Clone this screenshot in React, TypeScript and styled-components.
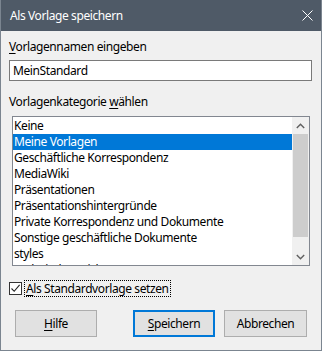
import * as React from "react";
import styled, { createGlobalStyle } from "styled-components";

const GlobalStyle = createGlobalStyle`
  html, body {
    margin: 0;
    padding: 0;
    background: #f0f0f0;
  }
  * {
    box-sizing: border-box;
  }
`;

const font = `"Noto Sans", "Open Sans", sans-serif`;

const Window = styled.div`
  width: 322px;
  height: 351px;
  display: flex;
  flex-direction: column;
  background: #f0f0f0;
  border: 1px solid #7b8590;
  border-top: none;
  font-family: ${font};
  font-size: 12px;
  letter-spacing: -0.4px;
  color: #000;
  overflow: hidden;
`;

const TitleBar = styled.div`
  height: 31px;
  flex: none;
  margin: 0 -1px;
  background: #4f5a67;
  display: flex;
  align-items: center;
  justify-content: space-between;
  padding: 0 9px 0 10px;
  color: #fff;
`;

const Body = styled.div`
  display: flex;
  flex-direction: column;
  padding: 8px 9px 0 8px;
`;

const Label = styled.div`
  height: 16px;
  line-height: 16px;
  white-space: nowrap;
`;

const Key = styled.span`
  text-decoration: underline;
  text-underline-offset: 2px;
  text-decoration-thickness: 1px;
`;

const TextInput = styled.div`
  margin-top: 5px;
  height: 21px;
  border: 1px solid #7a7a7a;
  background: #fff;
  padding: 0 3px;
  line-height: 19px;
`;

const SecondLabel = styled(Label)`
  margin-top: 13px;
`;

const ListBox = styled.div`
  margin: 6px 2px 0 3px;
  height: 150px;
  border: 1px solid #828790;
  background: #fff;
  display: flex;
  overflow: hidden;
`;

const Items = styled.div`
  flex: 1;
  padding-top: 1px;
  overflow: hidden;
`;

const Item = styled.div<{ $selected?: boolean }>`
  height: 16px;
  line-height: 16px;
  padding-left: 1px;
  white-space: nowrap;
  background: ${(p) => (p.$selected ? "#0078d7" : "transparent")};
  color: ${(p) => (p.$selected ? "#fff" : "#000")};
`;

const ScrollBar = styled.div`
  width: 17px;
  flex: none;
  background: #f0f0f0;
  display: flex;
  flex-direction: column;
  align-items: center;
`;

const ArrowBox = styled.div`
  height: 17px;
  width: 17px;
  flex: none;
  display: flex;
  align-items: center;
  justify-content: center;
`;

const Thumb = styled.div`
  width: 15px;
  height: 103px;
  background: #cdcdcd;
`;

const Track = styled.div`
  flex: 1;
`;

const CheckRow = styled.div`
  margin-top: 14px;
  display: flex;
  align-items: center;
  gap: 2px;
  height: 17px;
`;

const Box = styled.div`
  width: 13px;
  height: 13px;
  border: 1px solid #333;
  background: #fff;
  display: flex;
  align-items: center;
  justify-content: center;
`;

const CheckLabel = styled.div`
  border: 1px dotted #000;
  padding: 0 1px;
  height: 17px;
  line-height: 15px;
  white-space: nowrap;
`;

const ButtonRow = styled.div`
  margin-top: 13px;
  display: flex;
  padding-left: 6px;
`;

const Button = styled.div<{ $default?: boolean; $gap?: number; $width?: number }>`
  flex: none;
  width: ${(p) => p.$width ?? 82}px;
  height: 27px;
  margin-left: ${(p) => p.$gap ?? 0}px;
  display: flex;
  align-items: center;
  justify-content: center;
  background: #e1e1e1;
  border: ${(p) => (p.$default ? "2px solid #0078d7" : "1px solid #adadad")};
`;

const categories = [
  "Keine",
  "Meine Vorlagen",
  "Geschäftliche Korrespondenz",
  "MediaWiki",
  "Präsentationen",
  "Präsentationshintergründe",
  "Private Korrespondenz und Dokumente",
  "Sonstige geschäftliche Dokumente",
  "styles",
  "Technische Zeichnungen",
];

export default function App() {
  return (
    <>
      <GlobalStyle />
      <Window>
        <TitleBar>
          <span>Als Vorlage speichern</span>
          <svg width="11" height="11" viewBox="0 0 11 11">
            <path d="M0.5 0.5 L10.5 10.5 M10.5 0.5 L0.5 10.5" stroke="#fff" strokeWidth="1" />
          </svg>
        </TitleBar>
        <Body>
          <Label>
            <Key>V</Key>orlagennamen eingeben
          </Label>
          <TextInput>MeinStandard</TextInput>
          <SecondLabel>
            Vorlagenkategorie <Key>w</Key>ählen
          </SecondLabel>
          <ListBox>
            <Items>
              {categories.map((c, i) => (
                <Item key={c} $selected={i === 1}>
                  {c}
                </Item>
              ))}
            </Items>
            <ScrollBar>
              <ArrowBox>
                <svg width="9" height="6" viewBox="0 0 9 6">
                  <path d="M0.8 5 L4.5 1.3 L8.2 5" fill="none" stroke="#606060" strokeWidth="1.4" />
                </svg>
              </ArrowBox>
              <Thumb />
              <Track />
              <ArrowBox>
                <svg width="9" height="6" viewBox="0 0 9 6">
                  <path d="M0.8 1 L4.5 4.7 L8.2 1" fill="none" stroke="#606060" strokeWidth="1.4" />
                </svg>
              </ArrowBox>
            </ScrollBar>
          </ListBox>
          <CheckRow>
            <Box>
              <svg width="11" height="11" viewBox="0 0 11 11">
                <path d="M1.5 5.5 L4.2 8.3 L9.6 1.8" fill="none" stroke="#222" strokeWidth="1.1" />
              </svg>
            </Box>
            <CheckLabel>
              <Key>A</Key>ls Standardvorlage setzen
            </CheckLabel>
          </CheckRow>
          <ButtonRow>
            <Button>
              <span>
                <Key>H</Key>ilfe
              </span>
            </Button>
            <Button $default $gap={36}>
              <span>
                <Key>S</Key>peichern
              </span>
            </Button>
            <Button $gap={9} $width={83}>
              Abbrechen
            </Button>
          </ButtonRow>
        </Body>
      </Window>
    </>
  );
}
